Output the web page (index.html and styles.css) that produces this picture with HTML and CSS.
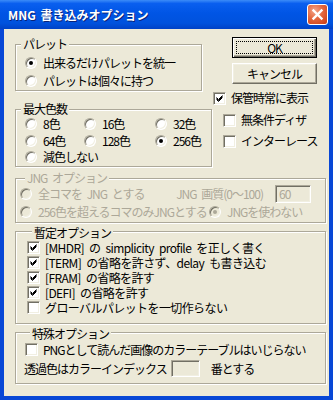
FILE: index.html
```html
<!DOCTYPE html>
<html lang="ja">
<head>
    <meta charset="UTF-8">
    <meta name="viewport" content="width=device-width, initial-scale=1.0">
    <title>MNG 書き込みオプション</title>
    <link rel="stylesheet" href="styles.css">
</head>
<body>
    <div class="window">
        <div class="titlebar">
            <span class="title">MNG 書き込みオプション</span>
            <span class="close-btn">
                <svg viewBox="0 0 19 19" width="19" height="19">
                    <path d="M5.5 5.5 L13.5 13.5 M13.5 5.5 L5.5 13.5" stroke="#fff" stroke-width="2.4" stroke-linecap="square" />
                </svg>
            </span>
        </div>

        <div class="client">
            <div class="top">
                <div class="left-col">
                    <div class="group palette">
                        <div class="group-title">パレット</div>
                        <div class="rows palette-rows">
                            <div class="opt"><span class="radio checked"></span>出来るだけパレットを統一</div>
                            <div class="opt"><span class="radio"></span>パレットは個々に持つ</div>
                        </div>
                    </div>

                    <div class="group colors">
                        <div class="group-title">最大色数</div>
                        <div class="color-grid">
                            <div class="opt"><span class="radio"></span>8色</div>
                            <div class="opt"><span class="radio"></span>16色</div>
                            <div class="opt"><span class="radio"></span>32色</div>
                            <div class="opt"><span class="radio"></span>64色</div>
                            <div class="opt"><span class="radio"></span>128色</div>
                            <div class="opt"><span class="radio checked"></span>256色</div>
                            <div class="opt wide"><span class="radio"></span>減色しない</div>
                        </div>
                    </div>
                </div>

                <div class="right-col">
                    <button class="btn default"><span class="focus">OK</span></button>
                    <button class="btn cancel">キャンセル</button>
                    <div class="opt keep"><span class="check checked"></span>保管時常に表示</div>
                    <div class="opt side first"><span class="check"></span>無条件ディザ</div>
                    <div class="opt side"><span class="check"></span>インターレース</div>
                </div>
            </div>

            <div class="group jng disabled">
                <div class="group-title">JNG オプション</div>
                <div class="jng-row row-one">
                    <div class="opt"><span class="radio"></span>全コマを JNG とする</div>
                    <div class="quality">
                        <span>JNG 画質(0〜100)</span>
                        <span class="edit quality-edit">60</span>
                    </div>
                </div>
                <div class="jng-row row-two">
                    <div class="opt"><span class="radio"></span>256色を超えるコマのみJNGとする</div>
                    <div class="opt"><span class="radio checked"></span>JNGを使わない</div>
                </div>
            </div>

            <div class="group interim">
                <div class="group-title">暫定オプション</div>
                <div class="rows interim-rows">
                    <div class="opt"><span class="check checked"></span>[MHDR] の simplicity profile を正しく書く</div>
                    <div class="opt"><span class="check checked"></span>[TERM] の省略を許さず、delay も書き込む</div>
                    <div class="opt"><span class="check checked"></span>[FRAM] の省略を許す</div>
                    <div class="opt"><span class="check checked"></span>[DEFI] の省略を許す</div>
                    <div class="opt"><span class="check"></span>グローバルパレットを一切作らない</div>
                </div>
            </div>

            <div class="group special">
                <div class="group-title">特殊オプション</div>
                <div class="opt png-row"><span class="check"></span>PNGとして読んだ画像のカラーテーブルはいじらない</div>
                <div class="index-row">
                    <span>透過色はカラーインデックス</span>
                    <span class="edit index-edit"></span>
                    <span>番とする</span>
                </div>
            </div>
        </div>
    </div>
</body>
</html>
```

FILE: styles.css
```css
* {
    box-sizing: border-box;
}

body {
    margin: 0;
    font-family: "Noto Sans CJK JP", sans-serif;
    font-size: 12px;
    color: #000;
    background: #ECE9D8;
}

.window {
    width: 333px;
    height: 400px;
    display: flex;
    flex-direction: column;
}

/* title bar */
.titlebar {
    height: 29px;
    display: flex;
    align-items: center;
    padding: 0 5px 0 8px;
    background: linear-gradient(to bottom, #3C8CF8 0%, #0A5FEF 12%, #0055E5 45%, #0052DD 80%, #0042C6 100%);
}

.title {
    color: #fff;
    font-weight: 700;
    font-size: 12px;
    line-height: 16px;
    word-spacing: 2px;
    text-shadow: 1px 1px 0 #0A2377;
}

.close-btn {
    margin-left: auto;
    width: 21px;
    height: 21px;
    border: 1px solid #fff;
    border-radius: 3px;
    display: flex;
    align-items: center;
    justify-content: center;
    background: radial-gradient(circle at 35% 30%, #F3A58A 0%, #E4683F 45%, #D44A22 80%, #C13C16 100%);
}

/* client area */
.client {
    flex: 1;
    background: #ECE9D8;
    border: 4px solid #0847D6;
    border-top: 0;
    padding: 0 3px 0 11px;
    display: flex;
    flex-direction: column;
    line-height: 14px;
    letter-spacing: -1px;
    word-spacing: 3px;
}

.top {
    display: flex;
}

.left-col {
    width: 197px;
    padding-top: 15px;
}

.right-col {
    flex: 1;
    display: flex;
    flex-direction: column;
    align-items: flex-start;
}

/* etched group boxes */
.group {
    border: 1px solid #ACA899;
    box-shadow: inset 1px 1px 0 #fff, 1px 1px 0 #fff;
}

.group-title {
    margin: -8px 0 0 5px;
    padding: 0 2px;
    width: fit-content;
    height: 14px;
    background: #ECE9D8;
}

.opt {
    display: flex;
    align-items: center;
    white-space: nowrap;
}

.palette {
    width: 187px;
}

.palette-rows {
    padding: 3px 0 0 9px;
}

.palette-rows .opt {
    height: 18px;
}

.colors {
    margin-top: 18px;
}

.color-grid {
    display: grid;
    grid-template-columns: 59px 71px auto;
    grid-auto-rows: 17px;
    padding: 0 0 0 9px;
    margin-top: -1px;
}

.color-grid .wide {
    grid-column: 1 / 4;
    height: 16px;
}

/* radio buttons */
.radio {
    width: 12px;
    height: 12px;
    margin-right: 6px;
    flex: none;
    border-radius: 50%;
    border: 1px solid;
    border-color: #ACA899 #fff #fff #ACA899;
    box-shadow: inset 1px 1px 0 #716F64, inset -1px -1px 0 #F1EFE2;
    background: #fff;
    display: flex;
    align-items: center;
    justify-content: center;
}

.radio.checked::after {
    content: '';
    width: 4px;
    height: 4px;
    border-radius: 50%;
    background: #000;
}

/* check boxes */
.check {
    width: 13px;
    height: 13px;
    margin-right: 5px;
    flex: none;
    border: 1px solid;
    border-color: #ACA899 #fff #fff #ACA899;
    box-shadow: inset 1px 1px 0 #716F64, inset -1px -1px 0 #F1EFE2;
    background: #fff;
}

.check.checked {
    background: #fff url("data:image/svg+xml,%3Csvg xmlns='http://www.w3.org/2000/svg' width='11' height='11'%3E%3Cpath d='M2.5 4.5 L4.5 6.5 L8.5 2.5 M2.5 5.5 L4.5 7.5 L8.5 3.5 M2.5 6.5 L4.5 8.5 L8.5 4.5' stroke='%23000' stroke-width='1' fill='none'/%3E%3C/svg%3E") center / 11px 11px no-repeat;
}

/* buttons */
.btn {
    width: 85px;
    height: 21px;
    padding: 0;
    margin-left: 20px;
    font: inherit;
    line-height: 14px;
    letter-spacing: -1px;
    color: #000;
    background: #ECE9D8;
    border: 1px solid;
    border-color: #fff #716F64 #716F64 #fff;
    box-shadow: inset -1px -1px 0 #ACA899, inset 1px 1px 0 #F1EFE2;
}

.btn.default {
    margin-top: 8px;
    border: 1px solid #000;
    box-shadow: inset 1px 1px 0 #fff, inset -1px -1px 0 #716F64, inset -2px -2px 0 #ACA899;
    padding: 3px;
    display: flex;
}

.btn .focus {
    flex: 1;
    border: 1px dotted #000;
    display: flex;
    align-items: center;
    justify-content: center;
}

.btn.cancel {
    margin-top: 5px;
}

.keep {
    margin: 7px 0 0 1px;
    height: 14px;
}

.side {
    margin: 7px 0 0 11px;
    height: 14px;
}

.side.first {
    margin-top: 8px;
}

/* JNG options (disabled) */
.jng {
    margin-top: 11px;
    padding: 0 14px 2px 4px;
}

.disabled {
    color: #ACA899;
}

.disabled .radio {
    background: #ECE9D8;
}

.disabled .radio.checked::after {
    background: #ACA899;
}

.jng-row {
    display: flex;
    align-items: center;
}

.row-one {
    height: 18px;
}

.row-two {
    height: 17px;
}

.row-two .opt:first-child {
    width: 189px;
}

.quality {
    margin-left: auto;
    display: flex;
    align-items: center;
    gap: 12px;
}

.edit {
    height: 18px;
    border: 1px solid;
    border-color: #ACA899 #fff #fff #ACA899;
    box-shadow: inset 1px 1px 0 #716F64, inset -1px -1px 0 #F1EFE2;
    background: #ECE9D8;
    padding: 0 3px;
    line-height: 16px;
}

.quality-edit {
    width: 36px;
}

/* interim options */
.interim {
    margin-top: 8px;
    padding: 2px 0 8px 11px;
}

.interim-rows {
    letter-spacing: -0.6px;
}

.interim-rows .opt {
    height: 15px;
}

/* special options */
.special {
    margin-top: 8px;
    padding: 2px 0 4px 9px;
}

.png-row {
    height: 17px;
}

.index-row {
    height: 21px;
    display: flex;
    align-items: center;
    margin-left: -1px;
}

.index-edit {
    width: 29px;
    height: 17px;
    margin: 0 11px 0 4px;
}
```
